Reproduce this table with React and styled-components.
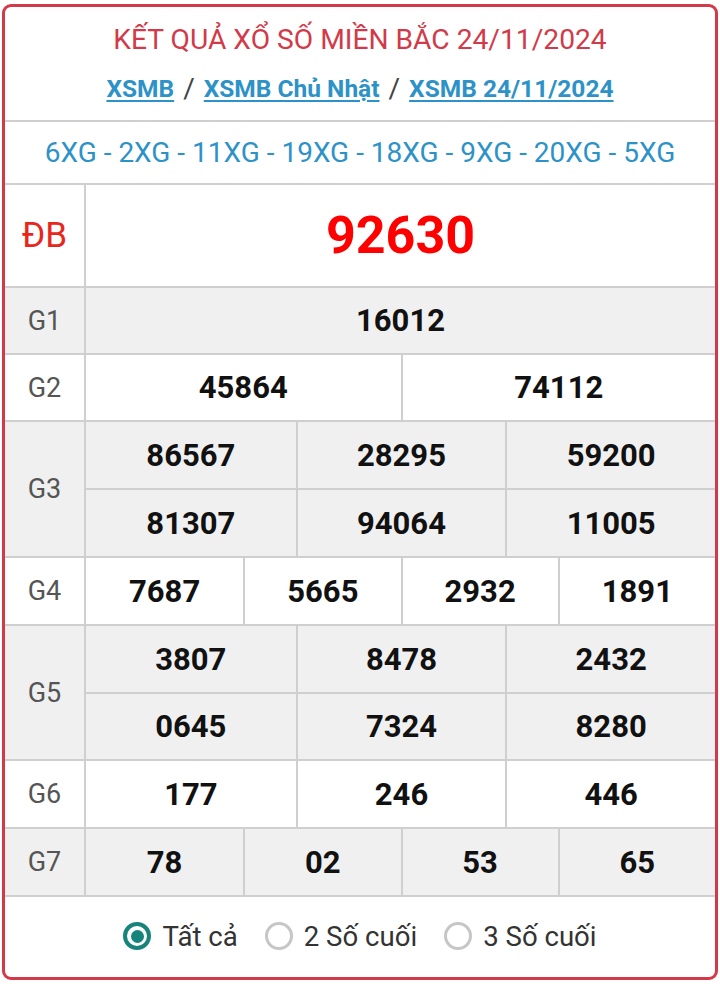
import React from "react";
import styled, { createGlobalStyle } from "styled-components";

const Global = createGlobalStyle`
  html, body { margin: 0; padding: 0; background: #fff; }
  body { font-family: Roboto, "Noto Sans", Arial, sans-serif; }
  * { box-sizing: border-box; }
`;

const Card = styled.div`
  margin: 4px 2px 0 2px;
  width: 716px;
  height: 976px;
  border: 3px solid #d23a4a;
  border-radius: 9px;
  overflow: hidden;
  display: flex;
  flex-direction: column;
  background: #fff;
`;

const Header = styled.div`
  height: 115px;
  display: flex;
  flex-direction: column;
  align-items: center;
  border-bottom: 2px solid #cfcfcf;
  padding-top: 17px;
`;

const Title = styled.h1`
  margin: 0;
  font-weight: 400;
  font-size: 28.2px;
  line-height: 32px;
  color: #d23a4a;
`;

const Crumbs = styled.div`
  margin-top: 18px;
  display: flex;
  align-items: center;
  gap: 9px;
  font-size: 24.5px;
  line-height: 30px;
`;

const Crumb = styled.a`
  color: #2d92c7;
  font-weight: 700;
  text-decoration: underline;
  text-underline-offset: 3px;
  text-decoration-thickness: 2px;
`;

const Sep = styled.span`
  color: #444;
  font-size: 28px;
`;

const Codes = styled.div`
  height: 63px;
  display: flex;
  align-items: center;
  justify-content: center;
  font-size: 28px;
  color: #2d92c7;
  border-bottom: 2px solid #cfcfcf;
`;

const Prize = styled.div`
  display: grid;
  grid-template-columns: 81px minmax(0, 1fr);
  background: ${(p) => (p.$alt ? "#f0f0f0" : "#fff")};
  border-bottom: 2px solid #cfcfcf;
`;

const Label = styled.div`
  display: flex;
  align-items: center;
  justify-content: center;
  border-right: 2px solid #cfcfcf;
  color: ${(p) => (p.$special ? "#e8261c" : "#555")};
  font-size: ${(p) => (p.$special ? "35px" : "27px")};
`;

const Values = styled.div`
  display: grid;
  grid-template-columns: repeat(${(p) => p.$cols}, minmax(0, 1fr));
`;

const Value = styled.div`
  height: ${(p) => p.$h}px;
  display: flex;
  align-items: center;
  justify-content: center;
  font-weight: 700;
  font-size: ${(p) => (p.$big ? "52px" : "31px")};
  color: ${(p) => (p.$big ? "#ff0000" : "#111")};
  border-left: ${(p) => (p.$first ? "none" : "2px solid #cfcfcf")};
  border-top: ${(p) => (p.$top ? "2px solid #cfcfcf" : "none")};
`;

const Footer = styled.div`
  flex: 1;
  display: flex;
  align-items: center;
  justify-content: center;
  gap: 27px;
  padding-bottom: 2px;
`;

const Option = styled.label`
  display: flex;
  align-items: center;
  gap: 11px;
  font-size: 27.6px;
  color: #333;
`;

const Radio = styled.span`
  width: 28px;
  height: 28px;
  border-radius: 50%;
  border: ${(p) => (p.$on ? "4px solid #17847b" : "3px solid #c6c6c6")};
  display: flex;
  align-items: center;
  justify-content: center;
  &::after {
    content: "";
    width: 13px;
    height: 13px;
    border-radius: 50%;
    background: ${(p) => (p.$on ? "#17847b" : "transparent")};
  }
`;

const rows = [
  { label: "G1", alt: true, cols: 1, h: [65], vals: ["16012"] },
  { label: "G2", alt: false, cols: 2, h: [65], vals: ["45864", "74112"] },
  { label: "G3", alt: true, cols: 3, h: [66, 66], vals: ["86567", "28295", "59200", "81307", "94064", "11005"] },
  { label: "G4", alt: false, cols: 4, h: [66], vals: ["7687", "5665", "2932", "1891"] },
  { label: "G5", alt: true, cols: 3, h: [66, 65], vals: ["3807", "8478", "2432", "0645", "7324", "8280"] },
  { label: "G6", alt: false, cols: 3, h: [66], vals: ["177", "246", "446"] },
  { label: "G7", alt: true, cols: 4, h: [66], vals: ["78", "02", "53", "65"] },
];

export default function App() {
  return (
    <>
      <Global />
      <Card>
        <Header>
          <Title>KẾT QUẢ XỔ SỐ MIỀN BẮC 24/11/2024</Title>
          <Crumbs>
            <Crumb>XSMB</Crumb>
            <Sep>/</Sep>
            <Crumb>XSMB Chủ Nhật</Crumb>
            <Sep>/</Sep>
            <Crumb>XSMB 24/11/2024</Crumb>
          </Crumbs>
        </Header>
        <Codes>6XG - 2XG - 11XG - 19XG - 18XG - 9XG - 20XG - 5XG</Codes>
        <Prize $alt={false}>
          <Label $special>ĐB</Label>
          <Values $cols={1}>
            <Value $first $big $h={101}>92630</Value>
          </Values>
        </Prize>
        {rows.map((r) => (
          <Prize key={r.label} $alt={r.alt}>
            <Label>{r.label}</Label>
            <Values $cols={r.cols}>
              {r.vals.map((v, i) => {
                const line = Math.floor(i / r.cols);
                return (
                  <Value
                    key={i}
                    $first={i % r.cols === 0}
                    $top={line > 0}
                    $h={r.h[line] + (line > 0 ? 2 : 0)}
                  >
                    {v}
                  </Value>
                );
              })}
            </Values>
          </Prize>
        ))}
        <Footer>
          <Option>
            <Radio $on />
            Tất cả
          </Option>
          <Option>
            <Radio />2 Số cuối
          </Option>
          <Option>
            <Radio />3 Số cuối
          </Option>
        </Footer>
      </Card>
    </>
  );
}
